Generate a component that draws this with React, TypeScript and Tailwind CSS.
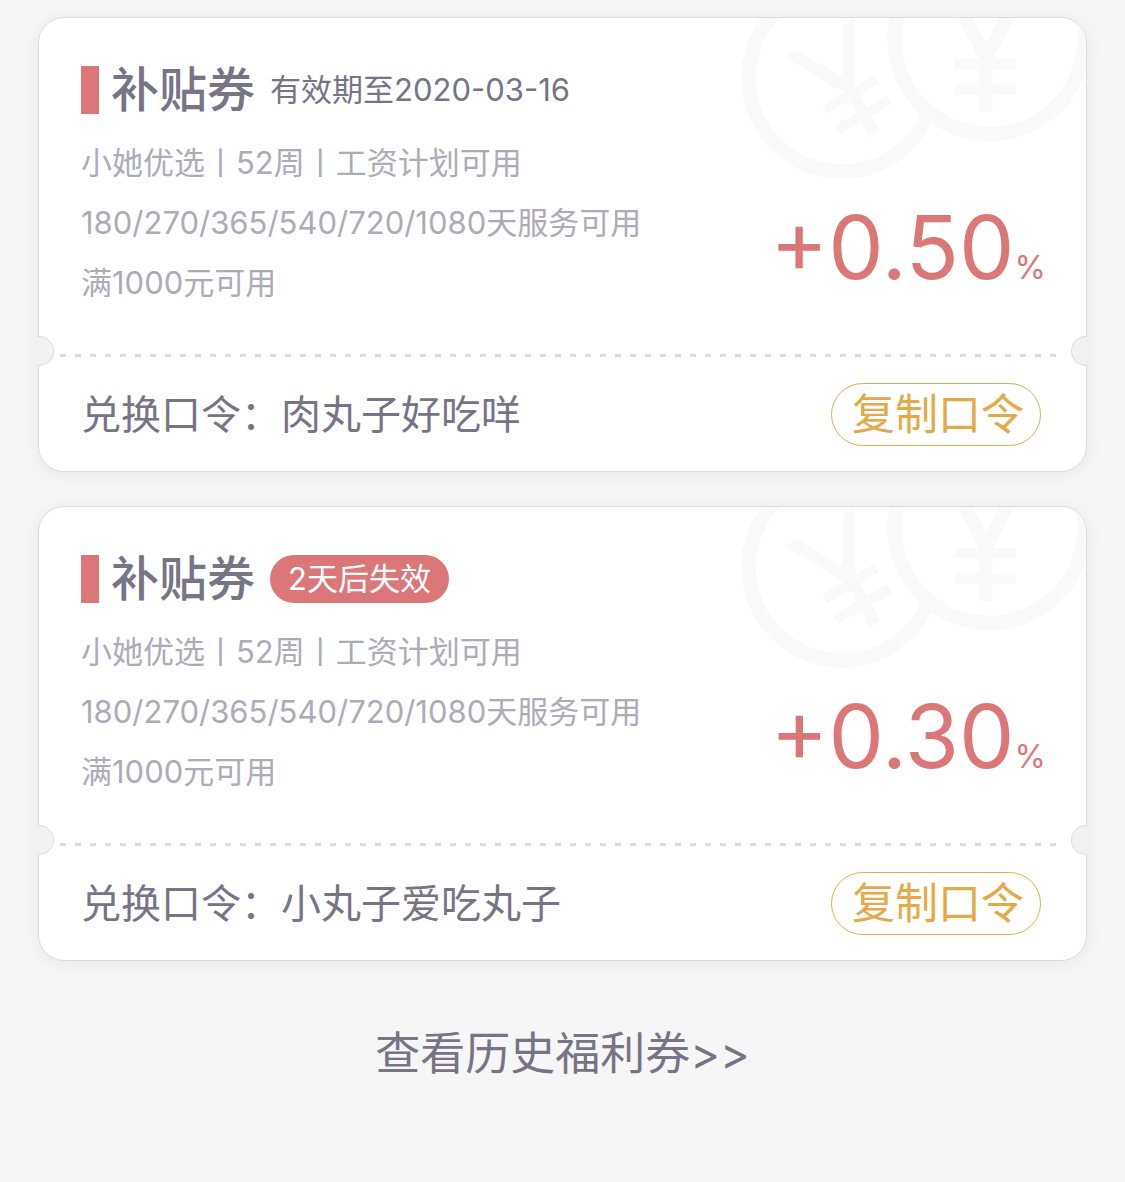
import React from "react";

interface ICoupon {
  id: number;
  title: string;
  expires?: string;
  badge?: string;
  rules: string[];
  rate: string;
  code: string;
}

const rules = ["小她优选丨52周丨工资计划可用", "180/270/365/540/720/1080天服务可用", "满1000元可用"];

const coupons: ICoupon[] = [
  {
    id: 1,
    title: "补贴券",
    expires: "有效期至2020-03-16",
    rules,
    rate: "+0.50",
    code: "肉丸子好吃咩",
  },
  {
    id: 2,
    title: "补贴券",
    badge: "2天后失效",
    rules,
    rate: "+0.30",
    code: "小丸子爱吃丸子",
  },
];

const Coins = () => (
  <svg
    className="absolute top-0 right-0"
    width="346"
    height="162"
    viewBox="740 18 346 162"
    fill="none"
    stroke="#f9f9f9"
    aria-hidden="true"
  >
    <circle cx="842" cy="78" r="93.5" strokeWidth="14.5" />
    <path
      d="M785 57L797 50L843 78V26L855 18V86L880 131L870 138L846 94Z"
      fill="#f9f9f9"
      stroke="none"
    />
    <path d="M825 109.5L877 79M836 130.5L890 99.5" strokeWidth="10" />
    <circle cx="989.5" cy="39" r="95" strokeWidth="14.5" fill="#fff" />
    <path d="M959 6L986 58M1013 6L986 58M986 50V112" strokeWidth="13.5" />
    <path d="M955 64H1016M955 89.5H1016" strokeWidth="10" />
  </svg>
);

const Coupon = ({ coupon }: { coupon: ICoupon }) => {
  return (
    <article className="relative rounded-[26px] border border-[#dcdcdc] bg-white shadow-[0_2px_16px_rgba(0,0,0,0.06)]">
      <div className="absolute inset-0 overflow-hidden rounded-[25px]">
        <Coins />
      </div>
      <div className="relative flex justify-between pt-12 pr-10 pb-[41px] pl-[42px]">
        <div>
          <div className="flex h-12 items-center">
            <span className="h-12 w-[18px] bg-[#dc7777]" />
            <h2 className="ml-3 text-[48px] leading-[50px] font-medium">{coupon.title}</h2>
            {coupon.expires && <p className="ml-[15px] text-[31px] leading-[48px]">{coupon.expires}</p>}
            {coupon.badge && (
              <p className="ml-[15px] rounded-full bg-[#dc7777] px-[18px] text-[31px] leading-[48px] text-white">
                {coupon.badge}
              </p>
            )}
          </div>
          <ul className="mt-[19px] text-[31px] leading-[60px] text-[#adabb8]">
            {coupon.rules.map((rule) => (
              <li key={rule}>{rule}</li>
            ))}
          </ul>
        </div>
        <p className="self-end text-[88px] leading-[90px] whitespace-nowrap text-[#dc7777]">
          {coupon.rate}
          <span className="text-[32px]">%</span>
        </p>
      </div>
      <div className="relative">
        <span className="absolute -top-[18px] -left-px h-[30px] w-4 rounded-r-full border border-l-0 border-[#dcdcdc] bg-[#f2f2f2]" />
        <span className="absolute -top-[18px] -right-px h-[30px] w-4 rounded-l-full border border-r-0 border-[#dcdcdc] bg-[#f2f2f2]" />
        <div className="mr-6 ml-[21px] h-[3px] bg-[repeating-linear-gradient(90deg,#dcdcdc_0_6px,transparent_6px_15px)]" />
      </div>
      <div className="relative flex items-center justify-between pt-[26px] pr-[45px] pb-[25px] pl-[42px]">
        <p className="text-[40px] leading-[62px]">兑换口令：{coupon.code}</p>
        <button
          type="button"
          className="rounded-full border border-[#e3ad4c] pr-4 pl-5 text-[43px] leading-[61px] text-[#e5aa47]"
        >
          复制口令
        </button>
      </div>
    </article>
  );
};

const App = () => {
  return (
    <main
      className="min-h-screen bg-[#f6f6f6] px-[38px] pt-[17px] font-[Inter,'Noto_Sans_CJK_SC',sans-serif] text-[#767485]"
      lang="zh-CN"
    >
      <div className="flex flex-col gap-[34px]">
        {coupons.map((coupon) => (
          <Coupon key={coupon.id} coupon={coupon} />
        ))}
      </div>
      <div className="mt-[60px] flex justify-center">
        <a href="#history" className="text-[45px] leading-[66px]">
          查看历史福利券&gt;&gt;
        </a>
      </div>
    </main>
  );
};

export default App;
